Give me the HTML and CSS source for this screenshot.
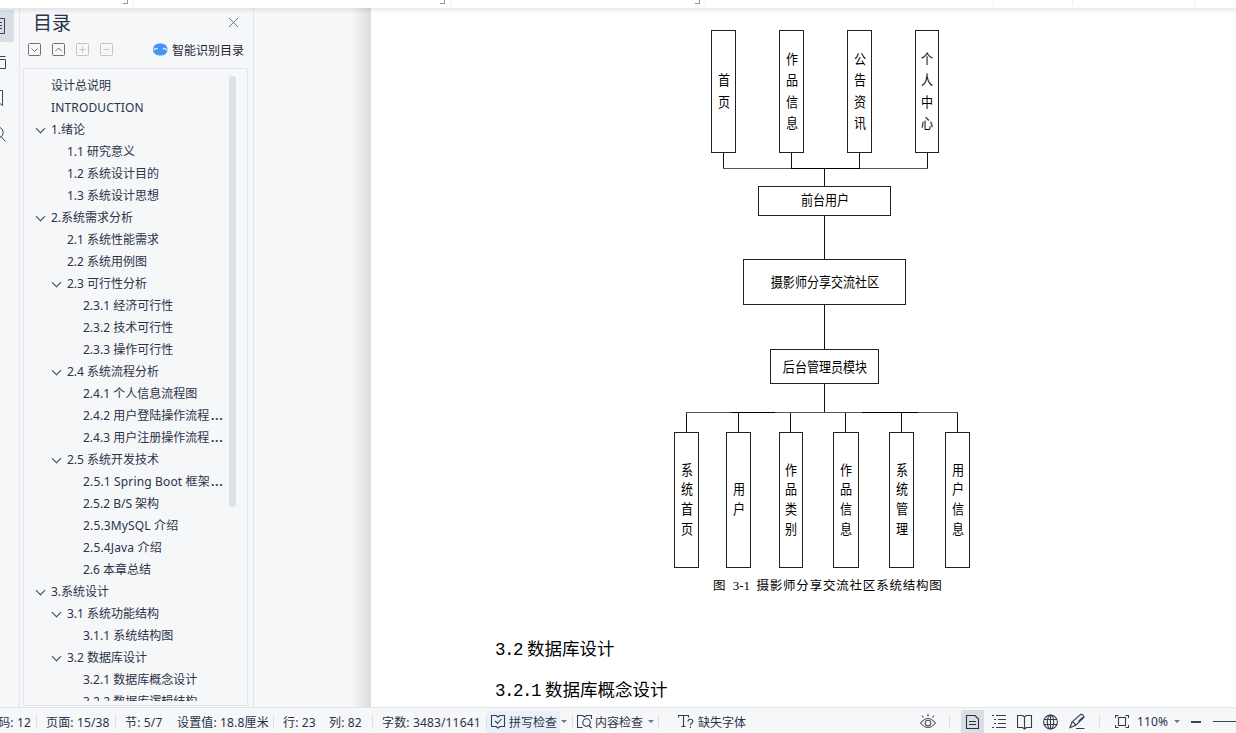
FILE: index.html
```
<!DOCTYPE html>
<html lang="zh-CN">
<head>
    <meta charset="UTF-8">
    <meta name="viewport" content="width=device-width, initial-scale=1.0">
    <title>目录</title>
    <link rel="stylesheet" href="styles.css">
</head>
<body>
    <div class="app">
        <div class="ribbon">
            <svg width="1236" height="8" shape-rendering="crispEdges" fill="none">
                <path stroke="#8f97b0" d="M123 3.5h5M127.500 0v4M440 3.500h5M444.500 0v4M695 3.500h5M699.500 0v4"/>
                <path stroke="#eceef1" d="M133.500 0v6M450.500 0v6M705.500 0v6M993.500 0v6M1072.500 0v6M1194.500 0v6"/>
            </svg>
        </div>

        <div class="main">
            <div class="rail">
                <div class="rail-active"></div>
                <svg width="19" height="160" fill="none" stroke="#3a435c">
                    <path d="M0 10.500h4.500v15H0M0 14.500h2M0 17.500h2M0 20.500h2"/>
                    <path d="M0 48.500h5.500M0 51.500h5.500v9H0"/>
                    <path d="M0 82.500h2.500v15L0 95.500"/>
                    <path d="M0 119.500a5.500 5.500 0 0 1 0 10M1 128.500l4.500 5"/>
                </svg>
            </div>

            <div class="panel">
                <div class="panel-title">
                    <h2>目录</h2>
                    <svg width="11" height="11" fill="none" stroke="#6b7590"><path d="M1 1l9 9M10 1l-9 9"/></svg>
                </div>
                <div class="panel-tools">
                    <svg width="86" height="13" fill="none">
                        <g stroke="#6e7073">
                            <rect x=".5" y=".5" width="12" height="12" rx="1"/><path d="M3.500 5.500l3 3 3-3"/>
                            <rect x="24.500" y=".5" width="12" height="12" rx="1"/><path d="M27.500 8l3-3 3 3"/>
                        </g>
                        <g stroke="#c3c5c8">
                            <rect x="48.500" y=".5" width="12" height="12" rx="1"/><path d="M51.500 6.500h6M54.500 3.500v6"/>
                            <rect x="72.500" y=".5" width="12" height="12" rx="1"/><path d="M75.500 6.500h6"/>
                        </g>
                    </svg>
                    <div class="smart">
                        <svg width="15" height="13" fill="none">
                            <rect x="0" y=".5" width="14.500" height="12" rx="6" fill="#4795f0"/>
                            <path d="M1 7.200q1.500-3 3.500-.8M10 6.400q2-2.200 3.500 .8" stroke="#d8eaff" stroke-width="1.300"/>
                        </svg>
                        <span>智能识别目录</span>
                    </div>
                </div>
                <div class="tree">
                    <div class="tree-list">
                        <div class="row l1">设计总说明</div>
                        <div class="row l1 latin">INTRODUCTION</div>
                        <div class="row l1 open">1.绪论</div>
                        <div class="row l2">1.1 研究意义</div>
                        <div class="row l2">1.2 系统设计目的</div>
                        <div class="row l2">1.3 系统设计思想</div>
                        <div class="row l1 open">2.系统需求分析</div>
                        <div class="row l2">2.1 系统性能需求</div>
                        <div class="row l2">2.2 系统用例图</div>
                        <div class="row l2 open">2.3 可行性分析</div>
                        <div class="row l3">2.3.1 经济可行性</div>
                        <div class="row l3">2.3.2 技术可行性</div>
                        <div class="row l3">2.3.3 操作可行性</div>
                        <div class="row l2 open">2.4 系统流程分析</div>
                        <div class="row l3">2.4.1 个人信息流程图</div>
                        <div class="row l3">2.4.2 用户登陆操作流程<b>...</b></div>
                        <div class="row l3">2.4.3 用户注册操作流程<b>...</b></div>
                        <div class="row l2 open">2.5 系统开发技术</div>
                        <div class="row l3 latin">2.5.1 Spring Boot 框架<b>...</b></div>
                        <div class="row l3">2.5.2 B/S 架构</div>
                        <div class="row l3 latin">2.5.3MySQL 介绍</div>
                        <div class="row l3 latin">2.5.4Java 介绍</div>
                        <div class="row l3">2.6 本章总结</div>
                        <div class="row l1 open">3.系统设计</div>
                        <div class="row l2 open">3.1 系统功能结构</div>
                        <div class="row l3">3.1.1 系统结构图</div>
                        <div class="row l2 open">3.2 数据库设计</div>
                        <div class="row l3">3.2.1 数据库概念设计</div>
                        <div class="row l3">3.2.2 数据库逻辑结构</div>
                    </div>
                    <div class="scrollbar"></div>
                </div>
            </div>

            <div class="gutter"></div>

            <div class="page">
                <div class="diagram">
                    <svg class="lines" width="297" height="540" fill="none" shape-rendering="crispEdges">
                        <path stroke="#111" d="M49.500 123v15M117.500 123v15M185.500 123v15M253.500 123v15M150.500 139v18M150.500 185v45M150.500 275v45M150.500 354v28M12.500 383v20M64.500 383v20M116.500 383v20M171.500 383v20M227.500 383v20M283.500 383v20"/>
                        <path stroke="#555" d="M49 138.500h205M12 382.500h272"/>
                        <path stroke="#000" d="M117 138.500h69M57 382.500h44M188 382.500h56"/>
                    </svg>
                    <div class="node tall top n1"><span>首页</span></div>
                    <div class="node tall top n2"><span>作品信息</span></div>
                    <div class="node tall top n3"><span>公告资讯</span></div>
                    <div class="node tall top n4"><span>个人中心</span></div>
                    <div class="node front"><span>前台用户</span></div>
                    <div class="node core"><span>摄影师分享交流社区</span></div>
                    <div class="node back"><span>后台管理员模块</span></div>
                    <div class="node tall bottom m1"><span>系统首页</span></div>
                    <div class="node tall bottom m2"><span>用户</span></div>
                    <div class="node tall bottom m3"><span>作品类别</span></div>
                    <div class="node tall bottom m4"><span>作品信息</span></div>
                    <div class="node tall bottom m5"><span>系统管理</span></div>
                    <div class="node tall bottom m6"><span>用户信息</span></div>
                </div>
                <p class="caption">图 <i>3-1</i> 摄影师分享交流社区系统结构图</p>
                <h3><i>3.2</i>数据库设计</h3>
                <h3><i>3.2.1</i>数据库概念设计</h3>
            </div>
        </div>

        <div class="status">
            <span class="cut">码: 12</span>
            <span class="sep"></span>
            <span>页面: 15/38</span>
            <span class="sep"></span>
            <span>节: 5/7</span>
            <span>设置值: 18.8厘米</span>
            <span class="sep"></span>
            <span>行: 23</span>
            <span>列: 82</span>
            <span class="sep"></span>
            <span>字数: 3483/11641</span>
            <span class="sep"></span>
            <span class="check">
                <svg width="16" height="15" fill="none" stroke="#333c52" stroke-width="1.100"><path d="M6 1.500H1.500v11h4.500l2 1.500 2-1.500h4.500v-11H10L8 3 6 1.500M5 7l2.500 2.500 4-4.500"/></svg>
                拼写检查
            </span>
            <span class="caret"></span>
            <span class="sep"></span>
            <span class="content">
                <svg width="16" height="15" fill="none" stroke="#333c52" stroke-width="1.100"><path d="M4 13.500H.5v-12h5L7.500 3l2-1.500h5V5M.5 13.500h5"/><circle cx="9.500" cy="8.500" r="3.700"/><path d="M12 11.500l2.500 2.500"/></svg>
                内容检查
            </span>
            <span class="caret"></span>
            <span class="sep"></span>
            <span class="fonts">
                <svg width="17" height="15" fill="none" stroke="#333c52" stroke-width="1.100"><path d="M.5 3.500v-2h10v2M5.500 1.500v11M3.500 12.500h4M10 7.500q0-2.200 2.400-2.200t2.400 2q0 1.300-1.200 2t-1.200 2M12.400 12.500v1.500"/></svg>
                缺失字体
            </span>
            <svg width="18" height="17" fill="none" stroke="#4a5166" stroke-width="1.100"><path d="M.5 10q7.500-9 15 0q-7.500 9-15 0zM8 3.500V1M3.500 4.500L2 2.500M12.500 4.500l1.500-2"/><circle cx="8" cy="10" r="2.800"/></svg>
            <span class="sep"></span>
            <span class="view-active">
                <svg width="15" height="16" fill="none" stroke="#2b3348" stroke-width="1.100"><path d="M1.500 1.500h8.500l3.500 3.500v9.500h-12zM4 7.500h7M4 10.500h7"/></svg>
            </span>
            <svg width="15" height="15" fill="none" stroke="#333c52" stroke-width="1.100"><path d="M0 1.500h2M4 1.500h10M2 5.500h2M6 5.500h8M2 9.500h2M6 9.500h8M0 13.500h2M4 13.500h10"/></svg>
            <svg width="16" height="16" fill="none" stroke="#333c52" stroke-width="1.100"><path d="M5.500 1.500h-5v12h5l2 1.500 2-1.500h5v-12h-5l-2 1.500-2-1.500M7.500 3v12"/></svg>
            <svg width="16" height="16" fill="none" stroke="#333c52" stroke-width="1.100"><circle cx="7.500" cy="8" r="6.900"/><ellipse cx="7.500" cy="8" rx="3.200" ry="6.900"/><path d="M1 5.500h13M1 10.500h13M7.500 1v14"/></svg>
            <svg width="17" height="17" fill="none" stroke="#333c52" stroke-width="1.100"><path d="M1 14.500l2-5.500L12 1.200q2.500 .3 3 3L6.500 12.500zM3 9q3 .5 3.500 3.500M9.500 8.500l4-4M7 15.500h8.500"/></svg>
            <span class="sep"></span>
            <svg width="15" height="15" fill="none" stroke="#333c52" stroke-width="1.100"><path d="M.5 4V1.500h3M10.500 1.500h3V4M13.500 11v2.500h-3M3.500 13.500h-3V11"/><rect x="3.500" y="3.500" width="7" height="8"/></svg>
            <span class="zoom">110%</span>
            <span class="caret"></span>
            <span class="minus"></span>
            <span class="slider"></span>
        </div>
    </div>
</body>
</html>
```
FILE: styles.css
```
* {
    box-sizing: border-box;
}

body {
    margin: 0;
    overflow: hidden;
    font-family: "Noto Sans", "Noto Sans CJK SC", sans-serif;
    font-size: 12px;
    color: #2b3348;
}

svg {
    display: block;
    flex-shrink: 0;
}

.app {
    display: flex;
    flex-direction: column;
    width: 1236px;
    height: 733px;
}

.ribbon {
    height: 8px;
    background: #fff;
    flex-shrink: 0;
}

.main {
    display: flex;
    height: 699px;
    position: relative;
    background: #f5f7f9;
}

/* shadow under the ribbon */
.main::before {
    content: "";
    position: absolute;
    left: 0;
    right: 0;
    top: 0;
    height: 6px;
    background: linear-gradient(rgba(0, 0, 0, 0.08), rgba(0, 0, 0, 0));
    z-index: 2;
}

.rail {
    width: 20px;
    border-right: 1px solid #e1e4ea;
    position: relative;
    overflow: hidden;
}

.rail svg {
    position: relative;
}

.rail-active {
    position: absolute;
    left: 0;
    top: 2px;
    width: 14px;
    height: 32px;
    border-radius: 0 2px 2px 0;
    background: #d9dee5;
}

.panel {
    width: 234px;
    border-right: 1px solid #e1e4ea;
    padding: 0 5px 0 3px;
    display: flex;
    flex-direction: column;
}

.panel-title {
    display: flex;
    justify-content: space-between;
    align-items: center;
    height: 30px;
    padding: 0 9px 2px 10px;
}

.panel-title h2 {
    margin: 0;
    font-size: 19px;
    font-weight: 400;
    line-height: 28px;
    padding-top: 2px;
}

.panel-tools {
    display: flex;
    justify-content: space-between;
    align-items: center;
    height: 22px;
    padding: 0 4px 0 5px;
}

.smart {
    display: flex;
    align-items: center;
    gap: 4px;
    padding-top: 1px;
    color: #1f2533;
}

.tree {
    display: flex;
    margin-top: 8px;
    height: 638px;
    border: 1px solid #e1e4ea;
    border-radius: 2px;
    padding: 6px 11px 5px 0;
    justify-content: space-between;
}

.tree-list {
    width: 203px;
    height: 626px;
    overflow: hidden;
}

.row {
    height: 22px;
    line-height: 22px;
    white-space: nowrap;
    position: relative;
}

.row b {
    position: absolute;
    left: 187px;
    letter-spacing: 0.7px;
}

.l1 {
    padding-left: 27px;
}

.l2 {
    padding-left: 43px;
}

.l3 {
    padding-left: 59px;
}

.latin {
    letter-spacing: 0.15px;
}

.open::before {
    content: "";
    position: absolute;
    top: 6px;
    width: 6px;
    height: 6px;
    margin-left: -14px;
    border: solid #3a435c;
    border-width: 0 1.2px 1.2px 0;
    transform: rotate(45deg);
}

.scrollbar {
    width: 7px;
    height: 431px;
    margin-top: 1px;
    border-radius: 4px;
    background: #dee1e4;
}

.gutter {
    width: 117px;
    background: linear-gradient(to right, rgba(0, 0, 0, 0) 97px, rgba(0, 0, 0, 0.11) 117px);
}

.page {
    flex: 1;
    background: #fff;
    color: #000;
    padding-top: 22px;
}

.page i {
    font-style: normal;
}

.diagram {
    position: relative;
    width: 297px;
    height: 540px;
    margin-left: 303px;
}

.lines {
    position: absolute;
    left: 0;
    top: 0;
}

.node {
    position: absolute;
    display: flex;
    align-items: center;
    justify-content: center;
    border: 1px solid #222;
    background: #fff;
    font-family: "Noto Sans CJK SC", sans-serif;
    font-size: 14px;
    line-height: 21px;
    white-space: nowrap;
    padding-bottom: 2px;
}

.node span {
    transform: scaleX(0.86);
}

.tall span {
    width: 14px;
    white-space: normal;
    word-break: break-all;
}

.top {
    top: 0;
    width: 25px;
    height: 123px;
    line-height: 21.3px;
}

.bottom {
    top: 402px;
    width: 25px;
    height: 136px;
    line-height: 19.700px;
}

.n1 { left: 37px; }
.n2 { left: 105px; }
.n3 { left: 173px; }
.n4 { left: 241px; width: 24px; }

.m1 { left: 0; }
.m2 { left: 52px; }
.m3 { left: 105px; width: 24px; }
.m4 { left: 159px; width: 26px; }
.m5 { left: 215px; }
.m6 { left: 271px; }

.front {
    left: 84px;
    top: 156px;
    width: 133px;
    height: 30px;
    padding-bottom: 3px;
}

.core {
    left: 69px;
    top: 229px;
    width: 163px;
    height: 46px;
}

.back {
    left: 96px;
    top: 319px;
    width: 109px;
    height: 35px;
    padding-bottom: 0;
}

.caption {
    margin: 5px 0 0 342px;
    font: 12.500px/20px "Noto Sans CJK SC", sans-serif;
    letter-spacing: 0.800px;
    word-spacing: 2.8px;
}

.caption i {
    font-family: "Liberation Serif", serif;
    font-size: 13px;
    letter-spacing: 0;
}

.page h3 {
    margin: 0 0 0 124px;
    height: 41px;
    font: 400 17.500px/41px "Noto Sans CJK SC", sans-serif;
}

.caption + h3 {
    margin-top: 31px;
}

.page h3 i {
    display: inline-block;
    font-family: "Liberation Mono", monospace;
    font-size: 17.5px;
    line-height: 1;
    letter-spacing: -1.5px;
    margin-right: 5px;
}

/* status bar: every cell starts where the previous one ends */
.status {
    display: grid;
    grid-template-columns:
        36px 10px 69px 10px 52px 96px 10px 46px 43px 10px 104px 1px 74px 11px
        5px 71px 10px 20px 242px 29px 12px 31px 25px 26px 26px 30px 16px
        22px 37px 17px 22px 23px;
    height: 26px;
    background: #f5f7f9;
    border-top: 1px solid #e1e4ea;
    align-items: center;
    white-space: nowrap;
    padding-top: 2px;
    letter-spacing: 0.150px;
}

.cut {
    display: flex;
    justify-content: flex-end;
    padding-right: 5px;
}

.sep {
    width: 1px;
    height: 14px;
    background: #dde1e7;
}

.check,
.content,
.fonts {
    display: flex;
    align-items: center;
    gap: 3px;
    letter-spacing: 0;
}

.content {
    gap: 2px;
}

.check {
    height: 22px;
    width: 73px;
    padding-left: 3px;
    background: #e8f0fb;
}

.caret {
    border: 3px solid transparent;
    border-top-color: #6b7590;
    border-bottom: 0;
    width: 6px;
}

.view-active {
    display: flex;
    align-items: center;
    justify-content: center;
    width: 23px;
    height: 23px;
    background: #d9dee5;
}

.minus {
    width: 10px;
    height: 2px;
    background: #3a435c;
}

.slider {
    height: 1px;
    background: #3a435c;
}
```
